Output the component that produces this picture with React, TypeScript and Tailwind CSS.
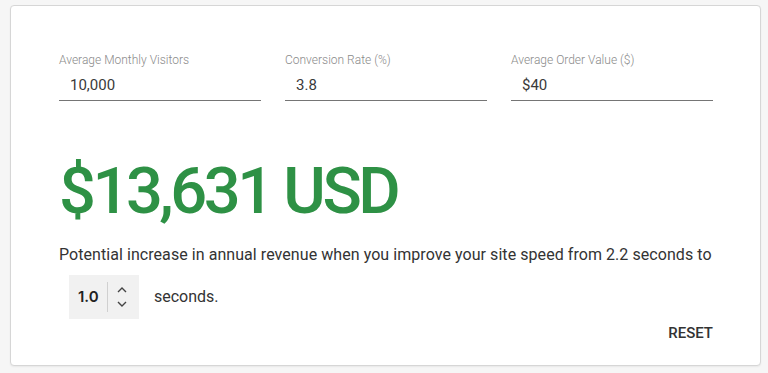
import React from "react";

function Field({ label, value }: { label: string; value: string }) {
  return (
    <div className="flex w-[202px] flex-col">
      <div className="text-[12px] font-light leading-[14px] text-[#8a8a8a]">{label}</div>
      <div className="mt-[9px] border-b border-[#757575] pb-[6px] pl-[11px] text-[15px] leading-[18px] text-[#3a3a3a]">
        {value}
      </div>
    </div>
  );
}

export default function App() {
  return (
    <div className="h-[373px] w-[768px] bg-[#f6f6f6] pl-[10px] pt-[5px]" style={{ fontFamily: "Roboto, sans-serif" }}>
      <div className="flex h-[361px] w-[751px] flex-col rounded-[4px] border border-[#d6d6d6] bg-white pl-[48px] pr-[47px] pt-[47px] shadow-[0_1px_2px_rgba(0,0,0,0.06)]">
        <div className="flex gap-[24px]">
          <Field label="Average Monthly Visitors" value="10,000" />
          <Field label="Conversion Rate (%)" value="3.8" />
          <Field label="Average Order Value ($)" value="$40" />
        </div>
        <div className="mt-[50px] text-[65px] font-medium leading-[80px] tracking-[-3.5px] text-[#2e9145]">
          $13,631 USD
        </div>
        <div className="mt-[12px] whitespace-nowrap text-[16px] leading-[24px] tracking-[0.06px] text-[#333]">
          Potential increase in annual revenue when you improve your site speed from 2.2 seconds to
        </div>
        <div className="mt-[8px] flex items-center">
          <div className="ml-[10px] flex h-[44px] w-[70px] items-center bg-[#f1f1f1]">
            <span className="ml-[9px] text-[15px] font-semibold text-[#222]" style={{ fontFamily: "Inter, sans-serif" }}>
              1.0
            </span>
            <div className="ml-[8px] h-[30px] w-px bg-[#d0d0d0]" />
            <div className="ml-[9px] flex flex-col items-center gap-[8px]">
              <svg width="10" height="6" viewBox="0 0 10 6" fill="none" stroke="#444" strokeWidth="1.4">
                <path d="M1 5l4-4 4 4" />
              </svg>
              <svg width="10" height="6" viewBox="0 0 10 6" fill="none" stroke="#444" strokeWidth="1.4">
                <path d="M1 1l4 4 4-4" />
              </svg>
            </div>
          </div>
          <span className="ml-[15px] text-[16px] text-[#333]">seconds.</span>
        </div>
        <div className="mt-[4px] flex justify-end">
          <span className="text-[15px] font-medium leading-[20px] text-[#333]">RESET</span>
        </div>
      </div>
    </div>
  );
}
